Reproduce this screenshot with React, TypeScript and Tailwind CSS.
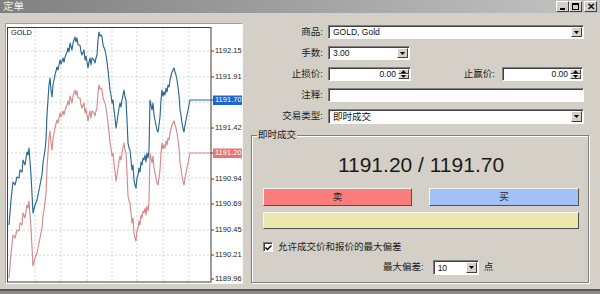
import React from 'react'

const FONT = "font-['Liberation_Sans','Noto_Sans_CJK_SC',sans-serif]"

const ASK: [number, number][] = [
  [9, 225], [11, 200], [13, 182], [15, 185], [17, 177], [19, 178], [20, 170], [22, 172], [23, 160], [25, 165],
  [27, 152], [28, 155], [29, 148], [31, 175], [33, 213], [35, 205], [37, 200], [39, 190], [40, 185], [42, 175],
  [43, 163], [45, 150], [46, 140], [47, 115], [48, 100], [49, 85], [50, 78], [51, 90], [52, 97], [53, 85],
  [54, 80], [55, 75], [57, 67], [58, 70], [60, 60], [61, 64], [63, 58], [64, 62], [65, 57], [67, 52],
  [68, 48], [69, 52], [70, 43], [72, 50], [73, 43], [74, 40], [75, 37], [76, 42], [77, 38], [78, 45],
  [80, 45], [81, 52], [82, 55], [84, 50], [85, 60], [86, 56], [88, 68], [89, 62], [90, 58], [91, 65],
  [92, 58], [94, 60], [95, 63], [96, 58], [97, 55], [98, 40], [99, 32], [100, 36], [101, 35], [102, 37],
  [103, 45], [105, 50], [106, 55], [107, 62], [108, 70], [109, 80], [110, 90], [111, 95], [112, 103], [113, 100],
  [114, 110], [115, 118], [116, 128], [117, 122], [118, 115], [119, 108], [120, 103], [121, 107], [122, 100], [123, 95],
  [124, 90], [125, 97], [126, 100], [127, 120], [128, 143], [129, 148], [130, 150], [131, 160], [132, 170], [133, 165],
  [134, 180], [135, 185], [136, 188], [137, 178], [138, 175], [139, 168], [140, 172], [141, 162], [142, 165], [143, 158],
  [144, 160], [145, 155], [146, 162], [147, 153], [148, 158], [149, 150], [150, 100], [151, 105], [152, 110], [153, 103],
  [154, 115], [155, 120], [156, 125], [157, 130], [158, 132], [159, 125], [160, 117], [161, 100], [162, 90], [163, 96],
  [164, 92], [165, 95], [166, 88], [167, 92], [168, 85], [169, 87], [170, 80], [171, 76], [172, 72], [173, 70],
  [174, 68], [175, 72], [176, 75], [177, 80], [178, 87], [179, 95], [180, 110], [181, 115], [182, 123], [183, 128],
  [184, 132], [185, 125], [186, 120], [187, 115], [188, 110], [189, 105], [190, 100], [211, 100],
]

const toPath = (pts: [number, number][], dy: number) =>
  pts.map(([x, y], i) => `${i ? 'L' : 'M'}${x} ${y + dy}`).join(' ')

const GRID_X = [35, 61, 87, 112, 137, 163, 189]
const GRID_Y = [51, 77, 102, 128, 153, 178, 204, 230, 255]
const LABELS: [number, string][] = [
  [51, '1192.15'], [77, '1191.91'], [128, '1191.42'], [179, '1190.94'],
  [204, '1190.69'], [230, '1190.45'], [255, '1190.21'], [279, '1189.96'],
]

function Chart() {
  return (
    <div className="mt-[10px] ml-[5px] h-[261px] w-[238px] border border-t-[#a0a0a0] border-l-[#a0a0a0] border-r-[#f8f8f8] border-b-[#f8f8f8] bg-white">
      <svg width={236} height={259} viewBox="6 24 236 259" className="block">
        <defs>
          <clipPath id="plot">
            <rect x={7} y={27} width={204} height={255} />
          </clipPath>
        </defs>
        {GRID_X.map((x) => (
          <line key={x} x1={x} x2={x} y1={27} y2={282} stroke="#c8c8c8" strokeWidth={0.8} strokeDasharray="2 2" />
        ))}
        {GRID_Y.map((y) => (
          <line key={y} x1={7} x2={211} y1={y} y2={y} stroke="#c8c8c8" strokeWidth={0.8} strokeDasharray="2 2" />
        ))}
        <g clipPath="url(#plot)" fill="none" strokeWidth={1.15} strokeLinejoin="round">
          <path d={toPath(ASK, 53)} stroke="#d48a8a" />
          <path d={toPath(ASK, 0)} stroke="#2a6890" />
        </g>
        <rect x={7.5} y={27.5} width={203.5} height={254.5} fill="none" stroke="#3c3c3c" strokeWidth={1} />
        {[...LABELS.map(([y]) => y), 100, 153].map((y) => (
          <line key={'t' + y} x1={211} x2={214} y1={y} y2={y} stroke="#3c3c3c" />
        ))}
        <text x={11} y={33} fontSize={7.4} fontFamily="Liberation Sans" dominantBaseline="middle" fill="#111">GOLD</text>
        {LABELS.map(([y, t]) => (
          <text key={t} x={215} y={y + 0.5} fontSize={7.5} fontFamily="Liberation Sans" dominantBaseline="middle" fill="#222">{t}</text>
        ))}
        <rect x={213} y={95.5} width={30} height={9.5} fill="#1f66c8" />
        <text x={215} y={100.5} fontSize={7.5} fontFamily="Liberation Sans" dominantBaseline="middle" fill="#fff">1191.70</text>
        <rect x={213} y={148.5} width={30} height={9.5} fill="#ee7373" />
        <text x={215} y={153.5} fontSize={7.5} fontFamily="Liberation Sans" dominantBaseline="middle" fill="#fff">1191.20</text>
      </svg>
    </div>
  )
}

function Arrow({ up }: { up?: boolean }) {
  return (
    <svg width={5} height={3} viewBox="0 0 5 3" className="block">
      <path d={up ? 'M2.5 0L5 3H0z' : 'M0 0h5L2.5 3z'} fill="#000" />
    </svg>
  )
}

function DropBtn() {
  return (
    <div className="flex h-full w-[11px] items-center justify-center border border-t-[#ffffff] border-l-[#ffffff] border-r-[#404040] border-b-[#404040] bg-[#d4d0c8]">
      <Arrow />
    </div>
  )
}

function Box({ className, children }: { className: string; children?: React.ReactNode }) {
  return (
    <div className={`flex border border-t-[#808080] border-l-[#808080] border-r-[#ffffff] border-b-[#ffffff] bg-white shadow-[inset_1px_1px_0_#404040] ${className}`}>
      {children}
    </div>
  )
}

function Combo({ w, value }: { w: string; value: string }) {
  return (
    <Box className={`h-[14px] items-stretch p-[1px] ${w}`}>
      <span className="flex-1 pl-[3px] text-[8.5px] leading-[11px]">{value}</span>
      <DropBtn />
    </Box>
  )
}

function Spin({ w }: { w: string }) {
  return (
    <Box className={`h-[14px] items-stretch p-[1px] ${w}`}>
      <span className="flex-1 pr-[2px] text-right text-[8.5px] leading-[11px]">0.00</span>
      <div className="flex w-[11px] flex-col">
        <div className="flex flex-1 items-center justify-center border border-t-[#ffffff] border-l-[#ffffff] border-r-[#404040] border-b-[#404040] bg-[#d4d0c8]">
          <Arrow up />
        </div>
        <div className="flex flex-1 items-center justify-center border border-t-[#ffffff] border-l-[#ffffff] border-r-[#404040] border-b-[#404040] bg-[#d4d0c8]">
          <Arrow />
        </div>
      </div>
    </Box>
  )
}

function Row({ label, children }: { label: string; children: React.ReactNode }) {
  return (
    <div className="flex h-[14px] items-center">
      <span className="w-[80px] text-right text-[9.5px] text-[#222]">{label}</span>
      <div className="ml-[5px] flex items-center">{children}</div>
    </div>
  )
}

function RaisedBar({ className, children }: { className: string; children?: React.ReactNode }) {
  return (
    <div className={`flex items-center justify-center border border-t-[#f4f4f4] border-l-[#f4f4f4] border-r-[#505050] border-b-[#505050] text-[9.5px] text-[#222] ${className}`}>
      {children}
    </div>
  )
}

function OrderForm() {
  return (
    <div className="flex w-[357px] flex-col pt-[12px]">
      <div className="flex flex-col gap-[7px]">
        <Row label="商品:">
          <Combo w="w-[256px]" value="GOLD, Gold" />
        </Row>
        <Row label="手数:">
          <Combo w="w-[82px]" value="3.00" />
        </Row>
        <Row label="止损价:">
          <Spin w="w-[83px]" />
          <span className="w-[84px] text-right text-[9.5px] text-[#222]">止赢价:</span>
          <div className="ml-[7px]">
            <Spin w="w-[81px]" />
          </div>
        </Row>
        <Row label="注释:">
          <Box className="h-[14px] w-[256px]" />
        </Row>
        <Row label="交易类型:">
          <Box className="h-[15px] w-[256px] items-stretch p-[1px]">
            <span className="flex-1 pl-[3px] text-[9.5px] leading-[12px]">即时成交</span>
            <DropBtn />
          </Box>
        </Row>
      </div>

      <div className="relative mt-[12px] ml-[8px] flex h-[148px] w-[338px] flex-col border border-[#808080] pr-[9px] pl-[11px] shadow-[1px_1px_0_#ffffff,inset_1px_1px_0_#ffffff]">
        <span className="absolute -top-[7px] left-[5px] bg-[#d4d0c8] px-[1px] text-[9.5px] leading-[12px] text-[#222]">即时成交</span>
        <div className="mt-[17px] h-[24px] text-center text-[21px] leading-[24px] text-[#1a1a1a]">1191.20 / 1191.70</div>
        <div className="mt-[11px] flex justify-between">
          <RaisedBar className="h-[18px] w-[149px] bg-[#fb7d7b]">卖</RaisedBar>
          <RaisedBar className="h-[18px] w-[150px] bg-[#a2c1f6]">买</RaisedBar>
        </div>
        <RaisedBar className="mt-[6px] h-[17px] bg-[#ebe7ad]" />
        <div className="mt-[12px] flex h-[12px] items-center">
          <Box className="h-[10px] w-[10px] items-center justify-center">
            <svg width={7} height={7} viewBox="0 0 7 7" className="block">
              <path d="M0.5 3.5L2.5 5.5L6.5 1.5" fill="none" stroke="#000" strokeWidth={1.4} />
            </svg>
          </Box>
          <span className="ml-[5px] text-[9.5px] text-[#222]">允许成交价和报价的最大偏差</span>
        </div>
        <div className="mt-[7px] flex h-[15px] items-center pl-[120px]">
          <span className="text-[9.5px] text-[#222]">最大偏差:</span>
          <div className="ml-[9px]">
            <Box className="h-[15px] w-[46px] items-stretch p-[1px]">
              <span className="flex-1 pl-[3px] text-[8.5px] leading-[12px]">10</span>
              <DropBtn />
            </Box>
          </div>
          <span className="ml-[5px] text-[9.5px] text-[#222]">点</span>
        </div>
      </div>
    </div>
  )
}

function WinBtn({ children, className = '' }: { children: React.ReactNode; className?: string }) {
  return (
    <div className={`flex h-[11px] w-[13px] items-center justify-center border border-t-[#ffffff] border-l-[#ffffff] border-r-[#404040] border-b-[#404040] bg-[#d4d0c8] ${className}`}>
      {children}
    </div>
  )
}

export default function App() {
  return (
    <div className={`flex h-[294px] w-[600px] flex-col overflow-hidden bg-[#d4d0c8] text-[#111] ${FONT}`}>
      <div className="flex h-[13px] items-center justify-between bg-linear-to-r from-[#808080] to-[#c4c4c4] pr-[3px] pl-[3px]">
        <span className="text-[10.5px] leading-[13px] text-[#f2f2f2]">定单</span>
        <div className="flex items-center">
          <WinBtn>
            <div className="mt-[5px] h-[2px] w-[5px] bg-black" />
          </WinBtn>
          <WinBtn>
            <div className="h-[7px] w-[7px] border border-t-2 border-black" />
          </WinBtn>
          <WinBtn className="ml-[2px]">
            <span className="text-[10px] leading-[10px] font-bold">✕</span>
          </WinBtn>
        </div>
      </div>
      <div className="flex h-[276px]">
        <Chart />
        <OrderForm />
      </div>
      <div className="h-[2px] bg-[#5a5a5a]" />
      <div className="flex-1 bg-[#8c8c8c]" />
    </div>
  )
}
